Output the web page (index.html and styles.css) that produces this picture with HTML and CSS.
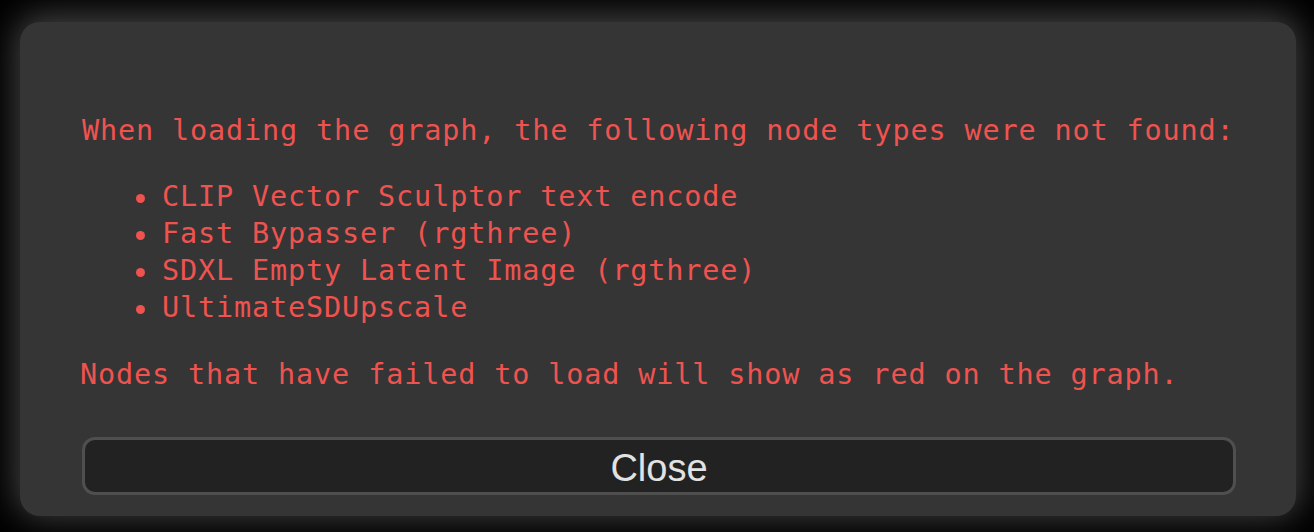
FILE: index.html
```html
<!DOCTYPE html>
<html>
<head>
<meta charset="utf-8">
<link rel="stylesheet" href="styles.css">
</head>
<body>
<div class="modal">
  <p class="intro">When loading the graph, the following node types were not found:</p>
  <ul class="missing">
    <li>CLIP Vector Sculptor text encode</li>
    <li>Fast Bypasser (rgthree)</li>
    <li>SDXL Empty Latent Image (rgthree)</li>
    <li>UltimateSDUpscale</li>
  </ul>
  <p class="outro">Nodes that have failed to load will show as red on the graph.</p>
  <button class="close">Close</button>
</div>
</body>
</html>
```
FILE: styles.css
```css
html, body {
  margin: 0;
  padding: 0;
  background: #000;
  width: 1314px;
  height: 532px;
  overflow: hidden;
}

.modal {
  box-sizing: border-box;
  width: 1276px;
  height: 494px;
  margin: 22px 0 0 20px;
  padding: 90px 60px 21px 62px;
  background: #353535;
  border-radius: 20px;
  box-shadow: 0 -3px 34px 4px rgba(150, 150, 150, 0.45);
  display: flex;
  flex-direction: column;
  font-family: "DejaVu Sans Mono", monospace;
  font-size: 28.5px;
  letter-spacing: 0.85px;
  line-height: 37px;
  color: #ef5350;
}

.intro {
  margin: 0;
  white-space: nowrap;
}

.missing {
  list-style: none;
  margin: 29px 0 0 0;
  padding: 0 0 0 80px;
}

.missing li {
  position: relative;
  white-space: nowrap;
}

.missing li::before {
  content: "";
  position: absolute;
  left: -26px;
  top: 16px;
  width: 9px;
  height: 9px;
  border-radius: 50%;
  background: #ef5350;
}

.outro {
  margin: 30px 0 0 -2px;
  white-space: nowrap;
}

.close {
  margin-top: 44px;
  height: 58px;
  width: 100%;
  box-sizing: border-box;
  background: #222;
  border: 3px solid #4f4f4f;
  border-radius: 13px;
  color: #e2e2e2;
  font-family: "Liberation Sans", Arial, sans-serif;
  font-size: 38px;
  letter-spacing: 0;
  padding: 3px 0 0 0;
  line-height: 1;
}
```
